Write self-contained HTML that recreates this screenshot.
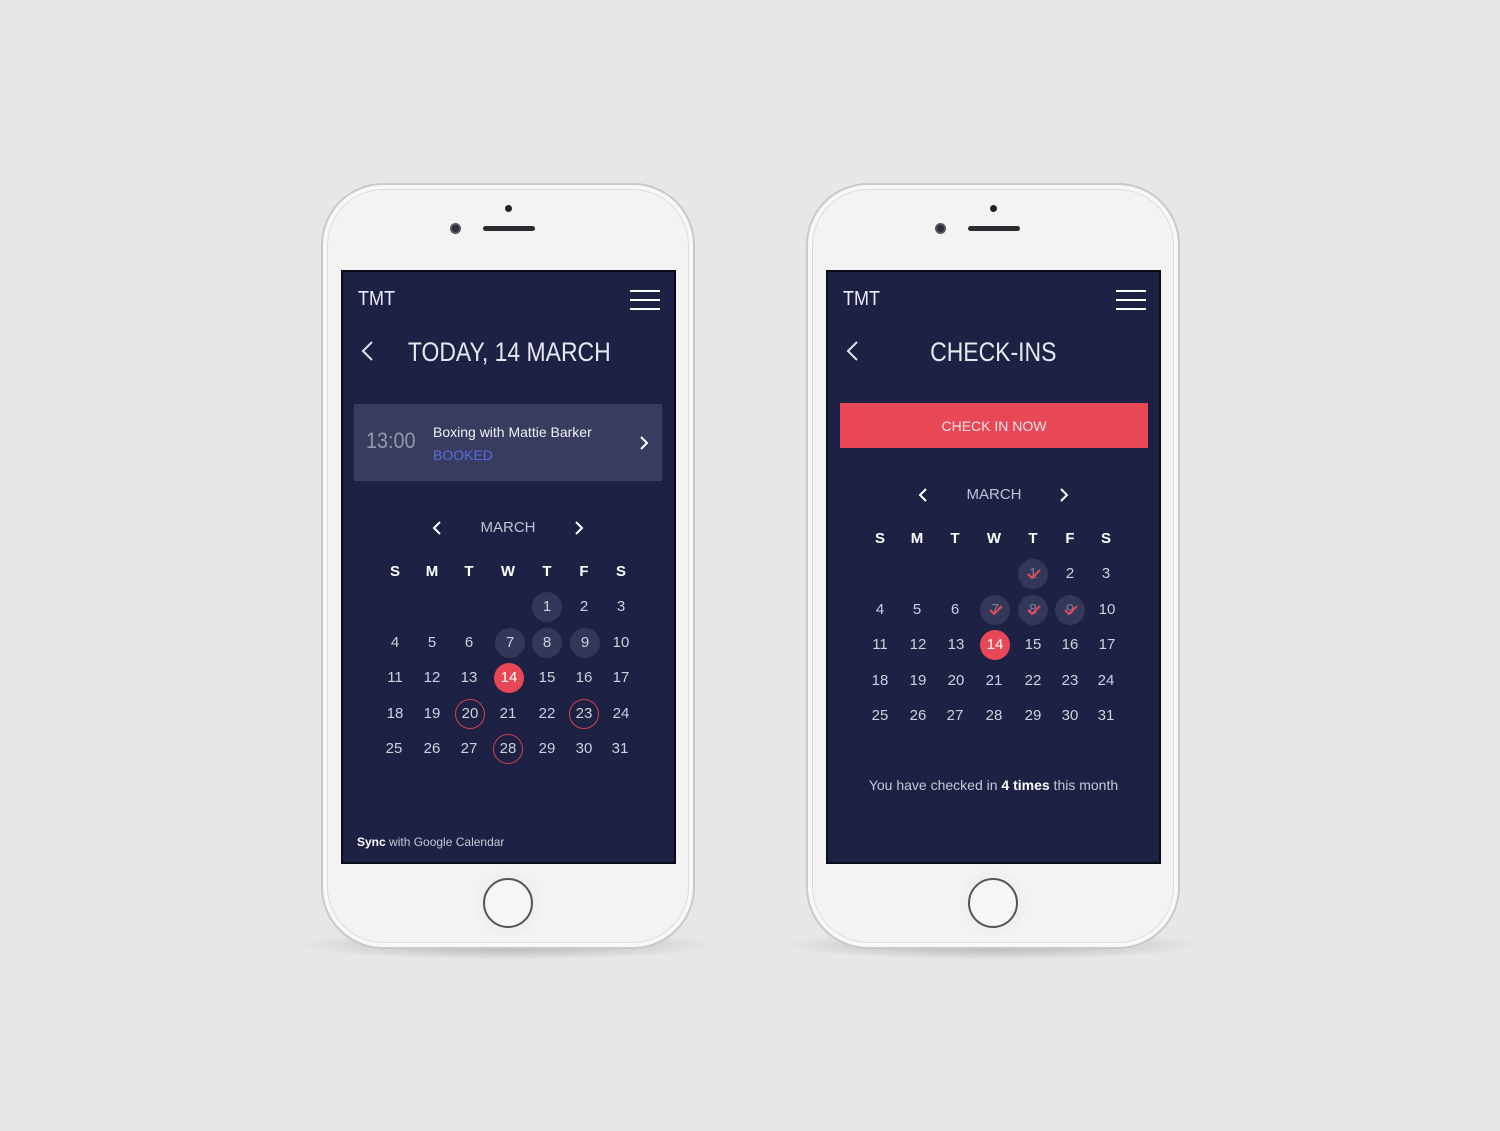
<!DOCTYPE html>
<html><head><meta charset="utf-8"><style>
*{margin:0;padding:0;box-sizing:border-box}
html,body{width:1500px;height:1131px;overflow:hidden}
body{background:#e6e7e6;font-family:"Liberation Sans",sans-serif;position:relative}
.a{position:absolute}
.shadow{position:absolute;height:30px;width:420px;border-radius:50%;background:radial-gradient(ellipse at center,rgba(0,0,0,.25),rgba(0,0,0,0) 70%)}
.phone{position:absolute;top:183px;width:374px;height:766px;border-radius:62px;background:#f3f3f3;border:2px solid #c9cacc;box-shadow:inset 0 0 0 4px #f8f8f8,inset 0 0 0 5px #dcdcdc}
.screen{position:absolute;top:270px;width:335px;height:594px;background:#1d2144;border:2px solid #0b0c18;overflow:hidden;color:#d6d8e4}
.home{position:absolute;width:50px;height:50px;border-radius:50%;border:2px solid #555;top:878px;background:#f6f6f6;box-shadow:0 0 0 8px #f0f0f0}
.spk{position:absolute;top:226px;width:52px;height:5px;border-radius:3px;background:#2c2c30}
.dot{position:absolute;top:205px;width:7px;height:7px;border-radius:50%;background:#222}
.cam{position:absolute;top:223px;width:11px;height:11px;border-radius:50%;background:#2b2d40;border:2px solid #555}
.d{position:absolute;width:30px;height:30px;margin:-14px 0 0 -15px;line-height:30px;text-align:center;font-size:15px;color:#cfd1dd;border-radius:50%}
.h{font-weight:bold;color:#fff;font-size:15px}
.g{background:#33385a}
.r{background:#e84755;color:#fff}
.o{border:1.5px solid #d0404f;line-height:27px}
.burger{position:absolute;width:30px}
.burger i{display:block;height:2px;background:#fff;margin-bottom:7px}
.tmt{position:absolute;font-size:20px;color:#eef;transform:scaleX(.9);transform-origin:left}
.title{position:absolute;width:335px;text-align:center}
.title span{display:inline-block;font-size:27px;color:#e6e8f0;transform:scaleX(.85)}
</style></head><body>

<div class="shadow" style="left:298px;top:930px"></div>
<div class="shadow" style="left:783px;top:930px"></div>

<div class="phone" style="left:321px"></div>
<div class="phone" style="left:806px"></div>
<div class="dot" style="left:505px"></div><div class="dot" style="left:990px"></div>
<div class="cam" style="left:450px"></div><div class="cam" style="left:935px"></div>
<div class="spk" style="left:483px"></div><div class="spk" style="left:968px"></div>
<div class="home" style="left:483px"></div><div class="home" style="left:968px"></div>

<div class="screen" style="left:341px"></div>
<div class="screen" style="left:826px"></div>

<!-- LEFT SCREEN -->
<div class="tmt" style="left:358px;top:288px">TMT</div>
<div class="burger" style="left:630px;top:290px"><i></i><i></i><i></i></div>
<svg class="a" style="left:360px;top:340px" width="16" height="24"><path d="M12 2 L3 11 L12 20" stroke="#dfe1ea" stroke-width="2" fill="none"/></svg>
<div class="title" style="left:342px;top:337px"><span>TODAY, 14 MARCH</span></div>
<div class="a" style="left:354px;top:404px;width:308px;height:77px;background:#383c5f"></div>
<div class="a" style="left:366px;top:428px;font-size:22px;color:#9598ac;transform:scaleX(.9);transform-origin:left">13:00</div>
<div class="a" style="left:433px;top:424px;font-size:14px;color:#f0f0f5">Boxing with Mattie Barker</div>
<div class="a" style="left:433px;top:447px;font-size:14px;color:#5a6ae0">BOOKED</div>
<svg class="a" style="left:638px;top:435px" width="12" height="16"><path d="M3 2 L9 8 L3 14" stroke="#fff" stroke-width="2" fill="none"/></svg>
<svg class="a" style="left:431px;top:520px" width="12" height="16"><path d="M9 2 L3 8 L9 14" stroke="#fff" stroke-width="2" fill="none"/></svg>
<svg class="a" style="left:573px;top:520px" width="12" height="16"><path d="M3 2 L9 8 L3 14" stroke="#fff" stroke-width="2" fill="none"/></svg>
<div class="a" style="left:458px;width:100px;top:519px;text-align:center;font-size:15px;color:#c0c3d4">MARCH</div>

<div class="d h" style="left:395px;top:571px">S</div><div class="d h" style="left:432px;top:571px">M</div><div class="d h" style="left:469px;top:571px">T</div><div class="d h" style="left:508px;top:571px">W</div><div class="d h" style="left:547px;top:571px">T</div><div class="d h" style="left:584px;top:571px">F</div><div class="d h" style="left:621px;top:571px">S</div>

<div class="d g" style="left:547px;top:606px">1</div><div class="d" style="left:584px;top:606px">2</div><div class="d" style="left:621px;top:606px">3</div>
<div class="d" style="left:395px;top:642px">4</div><div class="d" style="left:432px;top:642px">5</div><div class="d" style="left:469px;top:642px">6</div><div class="d g" style="left:510px;top:642px">7</div><div class="d g" style="left:547px;top:642px">8</div><div class="d g" style="left:585px;top:642px">9</div><div class="d" style="left:621px;top:642px">10</div>
<div class="d" style="left:395px;top:677px">11</div><div class="d" style="left:432px;top:677px">12</div><div class="d" style="left:469px;top:677px">13</div><div class="d r" style="left:509px;top:677px">14</div><div class="d" style="left:547px;top:677px">15</div><div class="d" style="left:584px;top:677px">16</div><div class="d" style="left:621px;top:677px">17</div>
<div class="d" style="left:395px;top:713px">18</div><div class="d" style="left:432px;top:713px">19</div><div class="d o" style="left:470px;top:713px">20</div><div class="d" style="left:508px;top:713px">21</div><div class="d" style="left:547px;top:713px">22</div><div class="d o" style="left:584px;top:713px">23</div><div class="d" style="left:621px;top:713px">24</div>
<div class="d" style="left:394px;top:748px">25</div><div class="d" style="left:432px;top:748px">26</div><div class="d" style="left:469px;top:748px">27</div><div class="d o" style="left:508px;top:748px">28</div><div class="d" style="left:547px;top:748px">29</div><div class="d" style="left:584px;top:748px">30</div><div class="d" style="left:620px;top:748px">31</div>

<div class="a" style="left:357px;top:835px;font-size:12px;color:#c7c9d6"><b style="color:#fff">Sync</b> with Google Calendar</div>

<!-- RIGHT SCREEN -->
<div class="tmt" style="left:843px;top:288px">TMT</div>
<div class="burger" style="left:1116px;top:290px"><i></i><i></i><i></i></div>
<svg class="a" style="left:845px;top:340px" width="16" height="24"><path d="M12 2 L3 11 L12 20" stroke="#dfe1ea" stroke-width="2" fill="none"/></svg>
<div class="title" style="left:826px;top:337px"><span>CHECK-INS</span></div>
<div class="a" style="left:840px;top:403px;width:308px;height:45px;background:#e84755;color:#fbe4e6;font-size:14px;text-align:center;line-height:46px">CHECK IN NOW</div>
<svg class="a" style="left:917px;top:487px" width="12" height="16"><path d="M9 2 L3 8 L9 14" stroke="#fff" stroke-width="2" fill="none"/></svg>
<svg class="a" style="left:1058px;top:487px" width="12" height="16"><path d="M3 2 L9 8 L3 14" stroke="#fff" stroke-width="2" fill="none"/></svg>
<div class="a" style="left:944px;width:100px;top:486px;text-align:center;font-size:15px;color:#c0c3d4">MARCH</div>

<div class="d h" style="left:880px;top:538px">S</div><div class="d h" style="left:917px;top:538px">M</div><div class="d h" style="left:955px;top:538px">T</div><div class="d h" style="left:994px;top:538px">W</div><div class="d h" style="left:1033px;top:538px">T</div><div class="d h" style="left:1070px;top:538px">F</div><div class="d h" style="left:1106px;top:538px">S</div>

<div class="d g" style="left:1033px;top:573px;color:#777b98">1<svg class="a" style="left:8px;top:8px" width="16" height="14"><path d="M2 7 L6 11 L14 3" stroke="#e84755" stroke-width="2" fill="none"/></svg></div>
<div class="d" style="left:1070px;top:573px">2</div><div class="d" style="left:1106px;top:573px">3</div>
<div class="d" style="left:880px;top:609px">4</div><div class="d" style="left:917px;top:609px">5</div><div class="d" style="left:955px;top:609px">6</div>
<div class="d g" style="left:995px;top:609px;color:#777b98">7<svg class="a" style="left:8px;top:8px" width="16" height="14"><path d="M2 7 L6 11 L14 3" stroke="#e84755" stroke-width="2" fill="none"/></svg></div>
<div class="d g" style="left:1033px;top:609px;color:#777b98">8<svg class="a" style="left:8px;top:8px" width="16" height="14"><path d="M2 7 L6 11 L14 3" stroke="#e84755" stroke-width="2" fill="none"/></svg></div>
<div class="d g" style="left:1070px;top:609px;color:#777b98">9<svg class="a" style="left:8px;top:8px" width="16" height="14"><path d="M2 7 L6 11 L14 3" stroke="#e84755" stroke-width="2" fill="none"/></svg></div>
<div class="d" style="left:1107px;top:609px">10</div>
<div class="d" style="left:880px;top:644px">11</div><div class="d" style="left:918px;top:644px">12</div><div class="d" style="left:956px;top:644px">13</div><div class="d r" style="left:995px;top:644px">14</div><div class="d" style="left:1033px;top:644px">15</div><div class="d" style="left:1070px;top:644px">16</div><div class="d" style="left:1107px;top:644px">17</div>
<div class="d" style="left:880px;top:680px">18</div><div class="d" style="left:918px;top:680px">19</div><div class="d" style="left:956px;top:680px">20</div><div class="d" style="left:994px;top:680px">21</div><div class="d" style="left:1033px;top:680px">22</div><div class="d" style="left:1070px;top:680px">23</div><div class="d" style="left:1106px;top:680px">24</div>
<div class="d" style="left:880px;top:715px">25</div><div class="d" style="left:918px;top:715px">26</div><div class="d" style="left:955px;top:715px">27</div><div class="d" style="left:994px;top:715px">28</div><div class="d" style="left:1033px;top:715px">29</div><div class="d" style="left:1070px;top:715px">30</div><div class="d" style="left:1106px;top:715px">31</div>

<div class="a" style="left:826px;width:335px;top:777px;text-align:center;font-size:14px;color:#c7c9d6">You have checked in <b style="color:#fff">4 times</b> this month</div>

</body></html>
